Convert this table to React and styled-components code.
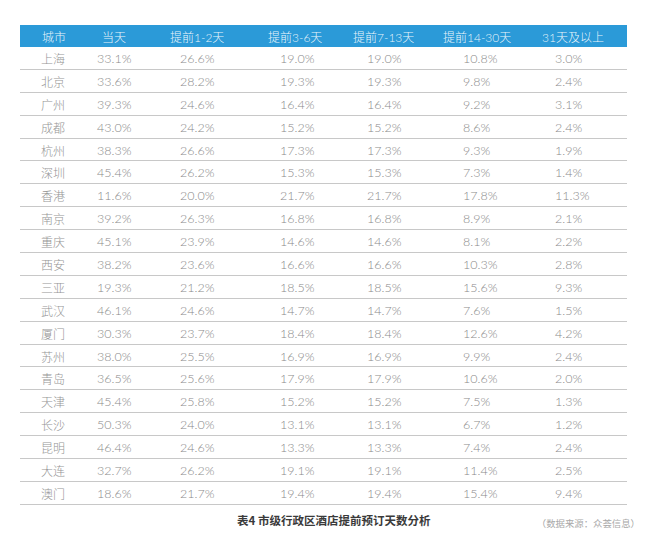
import React from 'react';
import styled, { createGlobalStyle } from 'styled-components';

const GlobalStyle = createGlobalStyle`
  body {
    margin: 0;
    background: #ffffff;
    font-family: "Lato", "Noto Sans CJK SC", sans-serif;
  }
`;

const Page = styled.div`
  width: 651px;
  height: 541px;
  padding: 25px 0 0 20px;
  box-sizing: border-box;
`;

const Table = styled.div`
  width: 607px;
`;

// header and body use their own column stops, as in the picture
const HEAD_COLS = '82px 68px 98px 85px 90px 99px 1fr';
const BODY_COLS = '77px 83px 100px 87px 96px 92px 1fr';

const Row = styled.div`
  display: grid;
  grid-template-columns: ${props => (props.$head ? HEAD_COLS : BODY_COLS)};
  align-items: center;
  box-sizing: border-box;
  height: ${props => (props.$head ? '22px' : '22.9px')};
  background: ${props => (props.$head ? '#2b9ad8' : 'transparent')};
  border-bottom: ${props => (props.$head ? 'none' : '1px solid #c8c8c8')};
`;

const HeadCell = styled.div`
  color: rgba(255, 255, 255, 0.92);
  font-size: 12px;
  font-weight: 300;
  white-space: nowrap;
  padding-left: ${props => (props.$first ? '22px' : '0')};
`;

const Cell = styled.div`
  color: ${props => (props.$first ? '#959595' : '#8a8a8a')};
  font-size: ${props => (props.$first ? '12px' : '12.5px')};
  font-weight: 300;
  white-space: nowrap;
  padding-left: ${props => (props.$first ? '21px' : '0')};
  padding-top: 1px;
`;

const Footer = styled.div`
  display: flex;
  align-items: center;
  padding: 5px 11px 0 217px;
`;

const Caption = styled.div`
  font-family: "Noto Sans CJK SC", sans-serif;
  font-size: 11.5px;
  font-weight: 700;
  color: #3a3a3a;
  line-height: 16px;
`;

const Source = styled.div`
  margin-left: auto;
  margin-top: 6px;
  font-family: "Noto Sans CJK SC", sans-serif;
  font-size: 9.4px;
  color: #a8a8a8;
`;

const headers = ['城市', '当天', '提前1-2天', '提前3-6天', '提前7-13天', '提前14-30天', '31天及以上'];

const rows = [
  ['上海', '33.1', '26.6', '19.0', '19.0', '10.8', '3.0'],
  ['北京', '33.6', '28.2', '19.3', '19.3', '9.8', '2.4'],
  ['广州', '39.3', '24.6', '16.4', '16.4', '9.2', '3.1'],
  ['成都', '43.0', '24.2', '15.2', '15.2', '8.6', '2.4'],
  ['杭州', '38.3', '26.6', '17.3', '17.3', '9.3', '1.9'],
  ['深圳', '45.4', '26.2', '15.3', '15.3', '7.3', '1.4'],
  ['香港', '11.6', '20.0', '21.7', '21.7', '17.8', '11.3'],
  ['南京', '39.2', '26.3', '16.8', '16.8', '8.9', '2.1'],
  ['重庆', '45.1', '23.9', '14.6', '14.6', '8.1', '2.2'],
  ['西安', '38.2', '23.6', '16.6', '16.6', '10.3', '2.8'],
  ['三亚', '19.3', '21.2', '18.5', '18.5', '15.6', '9.3'],
  ['武汉', '46.1', '24.6', '14.7', '14.7', '7.6', '1.5'],
  ['厦门', '30.3', '23.7', '18.4', '18.4', '12.6', '4.2'],
  ['苏州', '38.0', '25.5', '16.9', '16.9', '9.9', '2.4'],
  ['青岛', '36.5', '25.6', '17.9', '17.9', '10.6', '2.0'],
  ['天津', '45.4', '25.8', '15.2', '15.2', '7.5', '1.3'],
  ['长沙', '50.3', '24.0', '13.1', '13.1', '6.7', '1.2'],
  ['昆明', '46.4', '24.6', '13.3', '13.3', '7.4', '2.4'],
  ['大连', '32.7', '26.2', '19.1', '19.1', '11.4', '2.5'],
  ['澳门', '18.6', '21.7', '19.4', '19.4', '15.4', '9.4'],
];

export default function App() {
  return (
    <Page>
      <GlobalStyle />
      <Table>
        <Row $head>
          {headers.map((h, i) => (
            <HeadCell key={h} $first={i === 0}>{h}</HeadCell>
          ))}
        </Row>
        {rows.map(([city, ...vals]) => (
          <Row key={city}>
            <Cell $first>{city}</Cell>
            {vals.map((v, i) => (
              <Cell key={i}>{v}%</Cell>
            ))}
          </Row>
        ))}
      </Table>
      <Footer>
        <Caption>表4 市级行政区酒店提前预订天数分析</Caption>
        <Source>（数据来源：众荟信息）</Source>
      </Footer>
    </Page>
  );
}
